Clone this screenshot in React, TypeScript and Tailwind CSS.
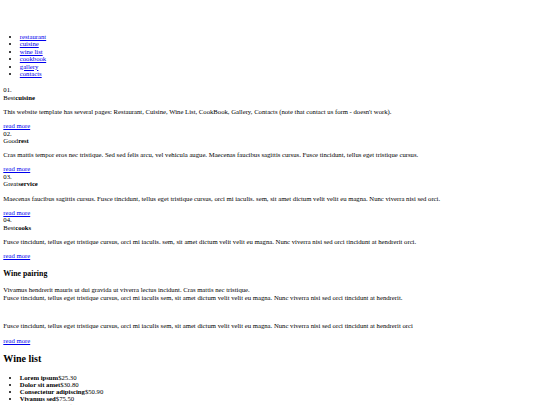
import React from 'react';

const menu = ['restaurant', 'cuisine', 'wine list', 'cookbook', 'gallery', 'contacts'];

const features = [
  {
    num: '01.',
    plain: 'Best',
    bold: 'cuisine',
    text: "This website template has several pages: Restaurant, Cuisine, Wine List, CookBook, Gallery, Contacts (note that contact us form - doesn't work).",
  },
  {
    num: '02.',
    plain: 'Good',
    bold: 'rest',
    text: 'Cras mattis tempor eros nec tristique. Sed sed felis arcu, vel vehicula augue. Maecenas faucibus sagittis cursus. Fusce tincidunt, tellus eget tristique cursus.',
  },
  {
    num: '03.',
    plain: 'Great',
    bold: 'service',
    text: 'Maecenas faucibus sagittis cursus. Fusce tincidunt, tellus eget tristique cursus, orci mi iaculis. sem, sit amet dictum velit velit eu magna. Nunc viverra nisi sed orci.',
  },
  {
    num: '04.',
    plain: 'Best',
    bold: 'cooks',
    text: 'Fusce tincidunt, tellus eget tristique cursus, orci mi iaculis. sem, sit amet dictum velit velit eu magna. Nunc viverra nisi sed orci tincidunt at hendrerit orci.',
  },
];

const wines: Array<[string, string]> = [
  ['Lorem ipsum', '$25.30'],
  ['Dolor sit amet', '$30.80'],
  ['Consectetur adipiscing', '$50.90'],
  ['Vivamus sed', '$75.50'],
  ['Nunc viverra nisi', '$100.10'],
];

const ReadMore = () => (
  <a href="#" className="text-[#0000ee] underline">
    read more
  </a>
);

export default function App() {
  return (
    <div className="min-h-[405px] bg-white px-[3.3px] pt-[26px] font-['Liberation_Serif','Times_New_Roman',serif] text-[6.7px] leading-[1.12] text-black">
      <ul className="mb-[8.5px] mt-[1em] list-disc pl-[16.5px]">
        {menu.map((item) => (
          <li key={item}>
            <a href="#" className="text-[#0000ee] underline">
              {item}
            </a>
          </li>
        ))}
      </ul>

      {features.map((f) => (
        <div key={f.num}>
          <div>{f.num}</div>
          <div>
            {f.plain}
            <strong className="font-bold">{f.bold}</strong>
          </div>
          <p className="my-[1em]">{f.text}</p>
          <ReadMore />
        </div>
      ))}

      <h3 className="mb-[1em] mt-[1.3em] text-[1.17em] font-bold">Wine pairing</h3>
      <p className="my-[1em]">
        Vivamus hendrerit mauris ut dui gravida ut viverra lectus incidunt. Cras mattis nec tristique.
        <br />
        Fusce tincidunt, tellus eget tristique cursus, orci mi iaculis sem, sit amet dictum velit velit eu magna. Nunc viverra nisi sed orci tincidunt at hendrerit.
      </p>
      <p className="my-[1em]">&nbsp;</p>
      <p className="my-[1em]">
        Fusce tincidunt, tellus eget tristique cursus, orci mi iaculis sem, sit amet dictum velit velit eu magna. Nunc viverra nisi sed orci tincidunt at hendrerit orci
      </p>
      <ReadMore />

      <h2 className="mb-[0.83em] mt-[0.85em] text-[1.5em] font-bold">Wine list</h2>
      <ul className="mb-[1em] mt-[10px] list-disc pl-[16.5px] leading-[1.07]">
        {wines.map(([name, price]) => (
          <li key={name}>
            <strong className="font-bold">{name}</strong>
            {price}
          </li>
        ))}
      </ul>
    </div>
  );
}
